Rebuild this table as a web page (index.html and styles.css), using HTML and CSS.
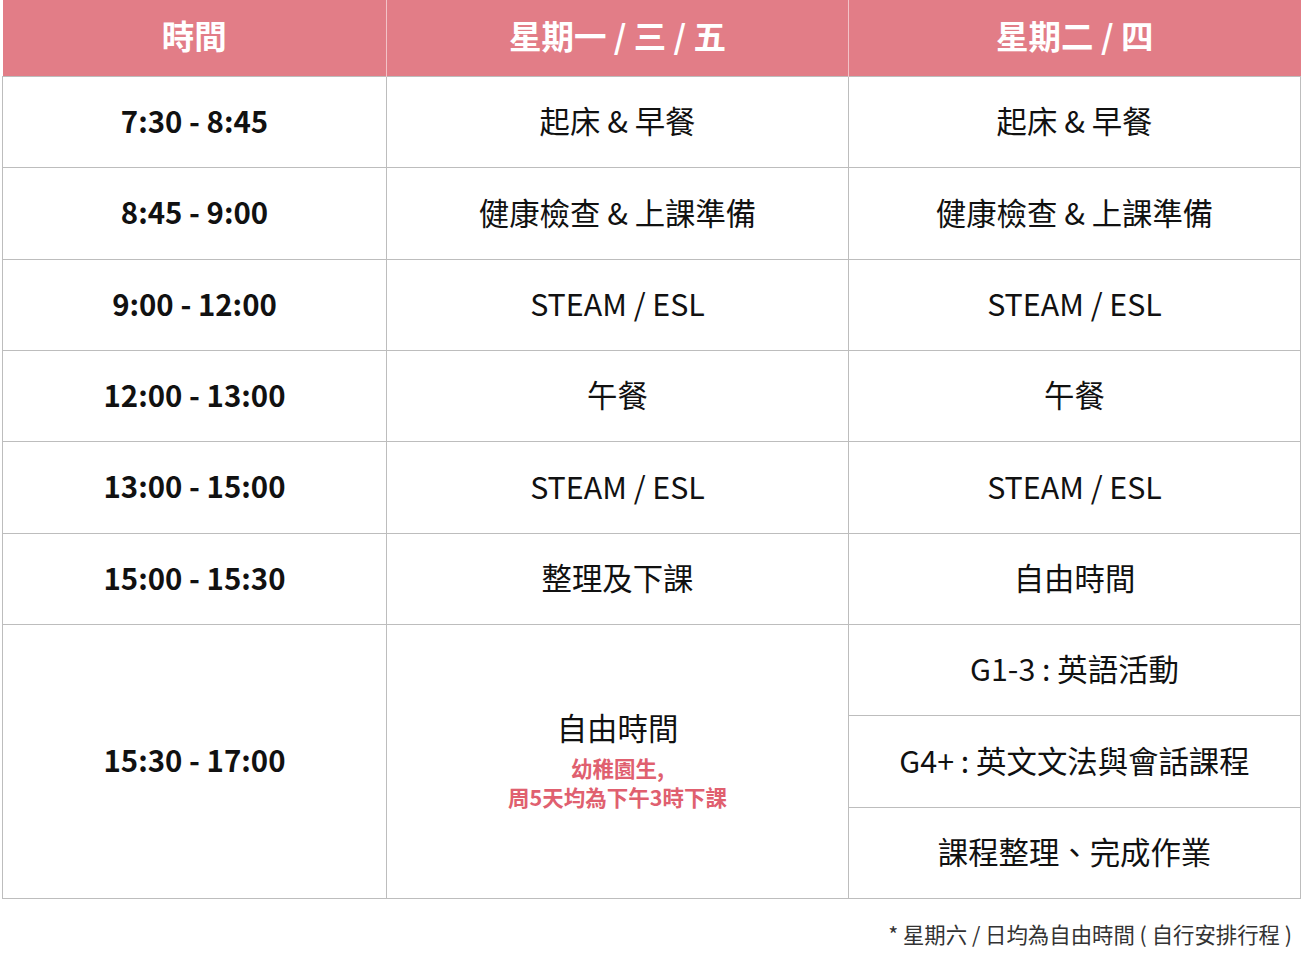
FILE: index.html
```html
<!DOCTYPE html>
<html lang="zh-Hant">
<head>
<meta charset="utf-8">
<title>課表</title>
<link rel="stylesheet" href="styles.css">
</head>
<body>
<div class="wrap">
<table class="schedule">
  <colgroup>
    <col class="c-time">
    <col class="c-a">
    <col class="c-b">
  </colgroup>
  <thead>
    <tr>
      <th>時間</th>
      <th>星期一 / 三 / 五</th>
      <th>星期二 / 四</th>
    </tr>
  </thead>
  <tbody>
    <tr><td class="time">7:30 - 8:45</td><td>起床 &amp; 早餐</td><td>起床 &amp; 早餐</td></tr>
    <tr><td class="time">8:45 - 9:00</td><td>健康檢查 &amp; 上課準備</td><td>健康檢查 &amp; 上課準備</td></tr>
    <tr><td class="time">9:00 - 12:00</td><td>STEAM / ESL</td><td>STEAM / ESL</td></tr>
    <tr><td class="time">12:00 - 13:00</td><td>午餐</td><td>午餐</td></tr>
    <tr><td class="time">13:00 - 15:00</td><td>STEAM / ESL</td><td>STEAM / ESL</td></tr>
    <tr><td class="time">15:00 - 15:30</td><td>整理及下課</td><td>自由時間</td></tr>
    <tr>
      <td class="time" rowspan="3">15:30 - 17:00</td>
      <td rowspan="3"><div class="main">自由時間</div><div class="note">幼稚園生,<br>周5天均為下午3時下課</div></td>
      <td>G1-3 : 英語活動</td>
    </tr>
    <tr><td>G4+ : 英文文法與會話課程</td></tr>
    <tr><td>課程整理、完成作業</td></tr>
  </tbody>
</table>
<p class="foot">* 星期六 / 日均為自由時間 ( 自行安排行程 )</p>
</div>
</body>
</html>
```
FILE: styles.css
```css
html, body {
  margin: 0;
  padding: 0;
  background: #fff;
}
body {
  font-family: "Noto Sans CJK TC", "Noto Sans", sans-serif;
  color: #111;
}
.wrap {
  padding: 0 4px 0 2px;
}
.schedule {
  width: 1298px;
  border-collapse: collapse;
  table-layout: fixed;
}
.c-time { width: 384px; }
.c-a { width: 462px; }
.c-b { width: 452px; }
.schedule th {
  background: #e27d87;
  color: #fff;
  font-size: 32.5px;
  font-weight: 700;
  height: 71px;
  padding: 0 0 5px 0;
  border-left: 1px solid #f3c3c8;
  text-align: center;
  vertical-align: middle;
  line-height: 1;
}
.schedule th:first-child { border-left: none; }
.schedule td {
  border: 1px solid #bdbdbd;
  height: 87.33px;
  padding: 0 0 3px 0;
  text-align: center;
  vertical-align: middle;
  font-size: 30.4px;
  font-weight: 400;
  line-height: 1.2;
}
.schedule td.time {
  font-weight: 700;
  font-size: 29.4px;
}
.main {
  font-size: 30.4px;
  line-height: 1.2;
  margin-bottom: 7px;
}
.note {
  color: #e0606f;
  font-size: 21.5px;
  font-weight: 700;
  line-height: 29px;
}
.foot {
  margin: 20px 8px 0 0;
  text-align: right;
  font-size: 21.4px;
  color: #333;
  line-height: 30px;
}
```
